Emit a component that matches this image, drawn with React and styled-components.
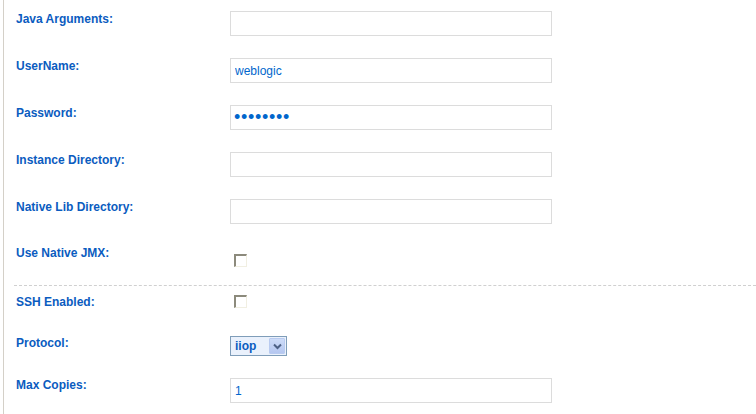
import React from "react";
import styled, { createGlobalStyle } from "styled-components";

const Global = createGlobalStyle`
  html, body { margin: 0; padding: 0; background: #fff; }
  body { font-family: "Liberation Sans", Arial, sans-serif; }
`;

const Page = styled.div`
  margin-left: 3px;
  border-left: 1px solid #d4d0c8;
  min-height: 414px;
  box-sizing: border-box;
`;

const Row = styled.div`
  display: grid;
  grid-template-columns: 214px 1fr;
  align-items: start;
  padding-left: 12px;
  height: ${(p) => p.$h}px;
  padding-top: ${(p) => p.$top || 0}px;
  box-sizing: border-box;
`;

const Label = styled.div`
  font-size: 12px;
  line-height: 14px;
  font-weight: bold;
  color: #0b5cc0;
  margin-top: ${(p) => p.$mt}px;
`;

const TextBox = styled.input`
  box-sizing: border-box;
  width: 322px;
  height: 25px;
  margin: ${(p) => p.$mt || 0}px 0 0 0;
  border: 1px solid #dcdcdc;
  padding: 0 4px;
  font-family: "Liberation Sans", Arial, sans-serif;
  font-size: 12px;
  color: #0066cc;
  background: #fff;
  outline: none;
  display: block;
`;

const PassBox = styled(TextBox)`
  font-size: 18px;
  letter-spacing: 0.7px;
  padding-left: 3px;
`;

const Check = styled.span`
  display: block;
  box-sizing: border-box;
  width: 13px;
  height: 13px;
  margin: ${(p) => p.$mt}px 0 0 4px;
  border-top: 2px solid #8c8a7c;
  border-left: 2px solid #8c8a7c;
  border-right: 1px solid #f1efe2;
  border-bottom: 1px solid #f1efe2;
  background: #fff;
`;

const Separator = styled.div`
  margin-left: 10px;
  border-top: 1px dashed #d0d0d0;
  height: 0;
`;

const Select = styled.div`
  box-sizing: border-box;
  width: 57px;
  height: 20px;
  margin-top: ${(p) => p.$mt}px;
  border: 1px solid #7f9db9;
  display: flex;
  align-items: stretch;
  background: #eaf1fc;
  padding: 1px;
`;

const SelectText = styled.div`
  flex: 1;
  font-size: 12px;
  font-weight: bold;
  color: #0b5cc0;
  line-height: 16px;
  padding-left: 3px;
`;

const SelectButton = styled.div`
  width: 16px;
  background: linear-gradient(#cddcf8, #b5c7f0);
  border: 1px solid #b9cbf0;
  border-radius: 1px;
  box-sizing: border-box;
  display: flex;
  align-items: center;
  justify-content: center;
`;

const textRows = [
  { label: "Java Arguments:", value: "" },
  { label: "UserName:", value: "weblogic" },
  { label: "Password:", value: "weblogic", password: true },
  { label: "Instance Directory:", value: "" },
  { label: "Native Lib Directory:", value: "" },
];

export default function App() {
  return (
    <>
      <Global />
      <Page>
        {textRows.map((r) => (
          <Row key={r.label} $h={47} $top={11}>
            <Label $mt={1}>{r.label}</Label>
            {r.password ? (
              <PassBox type="password" defaultValue={r.value} readOnly />
            ) : (
              <TextBox type="text" defaultValue={r.value} readOnly />
            )}
          </Row>
        ))}
        <Row $h={50}>
          <Label $mt={11}>Use Native JMX:</Label>
          <Check $mt={19} />
        </Row>
        <Separator />
        <Row $h={42}>
          <Label $mt={9}>SSH Enabled:</Label>
          <Check $mt={9} />
        </Row>
        <Row $h={42}>
          <Label $mt={8}>Protocol:</Label>
          <Select $mt={8}>
            <SelectText>iiop</SelectText>
            <SelectButton>
              <svg width="9" height="7" viewBox="0 0 9 7">
                <path d="M1 1.5 L4.5 5 L8 1.5" fill="none" stroke="#4d6185" strokeWidth="2" />
              </svg>
            </SelectButton>
          </Select>
        </Row>
        <Row $h={44}>
          <Label $mt={8}>Max Copies:</Label>
          <TextBox type="text" defaultValue="1" readOnly $mt={8} />
        </Row>
      </Page>
    </>
  );
}
